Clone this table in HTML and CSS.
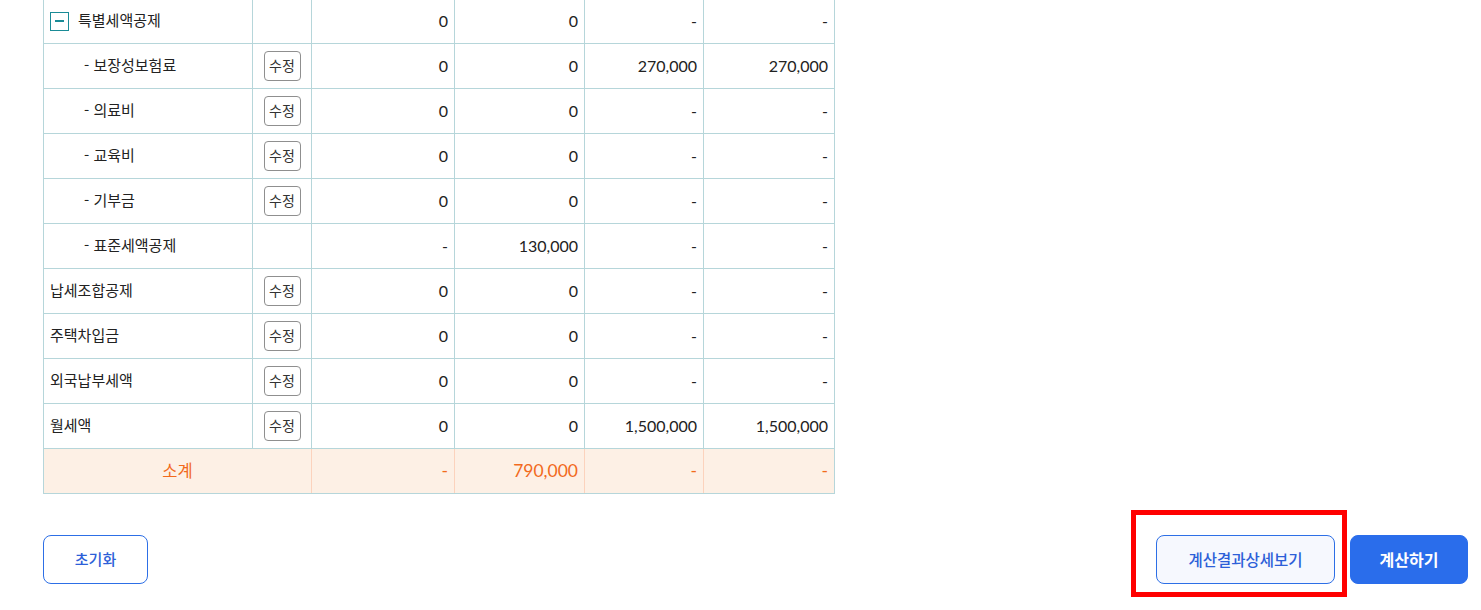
FILE: index.html
```html
<!DOCTYPE html>
<html lang="ko">
<head>
<meta charset="utf-8">
<title>세액공제</title>
<link rel="stylesheet" href="styles.css">
</head>
<body>
<div class="page">
  <table class="grid">
    <colgroup>
      <col class="c-name"><col class="c-btn"><col class="c-a"><col class="c-b"><col class="c-c"><col class="c-d">
    </colgroup>
    <tbody>
      <tr>
        <td class="group"><span class="tree"><span class="toggle"><span class="bar"></span></span><span class="tree-label">특별세액공제</span></span></td>
        <td></td><td class="num">0</td><td class="num">0</td><td class="num">-</td><td class="num">-</td>
      </tr>
      <tr>
        <td class="name sub">- 보장성보험료</td>
        <td class="btncell"><button class="edit">수정</button></td>
        <td class="num">0</td><td class="num">0</td><td class="num">270,000</td><td class="num">270,000</td>
      </tr>
      <tr>
        <td class="name sub">- 의료비</td>
        <td class="btncell"><button class="edit">수정</button></td>
        <td class="num">0</td><td class="num">0</td><td class="num">-</td><td class="num">-</td>
      </tr>
      <tr>
        <td class="name sub">- 교육비</td>
        <td class="btncell"><button class="edit">수정</button></td>
        <td class="num">0</td><td class="num">0</td><td class="num">-</td><td class="num">-</td>
      </tr>
      <tr>
        <td class="name sub">- 기부금</td>
        <td class="btncell"><button class="edit">수정</button></td>
        <td class="num">0</td><td class="num">0</td><td class="num">-</td><td class="num">-</td>
      </tr>
      <tr>
        <td class="name sub">- 표준세액공제</td>
        <td></td>
        <td class="num">-</td><td class="num">130,000</td><td class="num">-</td><td class="num">-</td>
      </tr>
      <tr>
        <td class="name">납세조합공제</td>
        <td class="btncell"><button class="edit">수정</button></td>
        <td class="num">0</td><td class="num">0</td><td class="num">-</td><td class="num">-</td>
      </tr>
      <tr>
        <td class="name">주택차입금</td>
        <td class="btncell"><button class="edit">수정</button></td>
        <td class="num">0</td><td class="num">0</td><td class="num">-</td><td class="num">-</td>
      </tr>
      <tr>
        <td class="name">외국납부세액</td>
        <td class="btncell"><button class="edit">수정</button></td>
        <td class="num">0</td><td class="num">0</td><td class="num">-</td><td class="num">-</td>
      </tr>
      <tr>
        <td class="name">월세액</td>
        <td class="btncell"><button class="edit">수정</button></td>
        <td class="num">0</td><td class="num">0</td><td class="num">1,500,000</td><td class="num">1,500,000</td>
      </tr>
      <tr class="total">
        <td class="label" colspan="2">소계</td>
        <td class="num">-</td><td class="num">790,000</td><td class="num">-</td><td class="num">-</td>
      </tr>
    </tbody>
  </table>

  <div class="actions">
    <button class="btn btn-outline">초기화</button>
    <div class="right">
      <div class="highlight-wrap">
        <button class="btn btn-soft">계산결과상세보기</button>
        <span class="highlight"></span>
      </div>
      <button class="btn btn-primary">계산하기</button>
    </div>
  </div>
</div>
</body>
</html>
```

FILE: styles.css
```css
* { box-sizing: border-box; }

html, body {
  margin: 0;
  padding: 0;
  background: #ffffff;
  overflow: hidden;
}

body {
  font-family: "Lato", "Noto Sans CJK KR", sans-serif;
  color: #222222;
}

.page {
  width: 1481px;
  height: 610px;
  padding: 0 13px 0 43px;
}

.grid {
  border-collapse: collapse;
  table-layout: fixed;
  width: 791px;
  margin-top: -2px;
  font-size: 16px;
}

.c-name { width: 209px; }
.c-btn { width: 59px; }
.c-a { width: 143px; }
.c-b { width: 130px; }
.c-c { width: 119px; }
.c-d { width: 131px; }

.grid td {
  height: 45px;
  border: 1px solid #b6d6da;
  padding: 0 6px;
  vertical-align: middle;
  white-space: nowrap;
  line-height: 20px;
}

.grid td.name {
  font-family: "Noto Sans CJK KR", sans-serif;
  font-size: 15px;
  padding: 0 6px 2px 6px;
  color: #222;
}

.grid td.sub {
  padding-left: 40px;
}

.grid td.group {
  padding: 0 6px 0 6px;
}

.tree {
  display: flex;
  align-items: center;
}

.tree-label {
  font-family: "Noto Sans CJK KR", sans-serif;
  font-size: 15px;
  line-height: 20px;
  padding-bottom: 2px;
}

.toggle {
  display: flex;
  align-items: center;
  justify-content: center;
  width: 19px;
  height: 19px;
  border: 1px solid #1a8b96;
  margin-right: 9px;
  flex: none;
}

.toggle .bar {
  width: 9px;
  height: 1.5px;
  background: #1a8b96;
}

.grid td.num {
  text-align: right;
  padding-right: 6px;
}

.btncell {
  text-align: center;
}

.edit {
  font-family: "Noto Sans CJK KR", sans-serif;
  font-size: 14px;
  color: #333;
  background: #fff;
  border: 1px solid #8f8f8f;
  border-radius: 4px;
  width: 37px;
  height: 30px;
  padding: 0 0 2px 0;
  line-height: 24px;
  vertical-align: middle;
}

.total td {
  background: #fdf0e5;
  color: #f26a1c;
  border-color: #fcd3bd;
}

.total td:first-child { border-left-color: #b6d6da; }
.total td:last-child { border-right-color: #b6d6da; }
.total td { border-bottom-color: #b6d6da; }

.grid .total td.label {
  text-align: center;
  font-family: "Noto Sans CJK KR", sans-serif;
  font-size: 16.5px;
  padding: 0 0 3px 0;
}

.grid .total td.num {
  font-size: 17.5px;
}

.actions {
  display: flex;
  justify-content: space-between;
  align-items: center;
  margin-top: 41px;
}

.right {
  display: flex;
  gap: 15px;
  align-items: center;
}

.btn {
  font-family: "Noto Sans CJK KR", sans-serif;
  height: 49px;
  border-radius: 8px;
  font-size: 15px;
  padding: 0 0 2px 0;
  cursor: pointer;
}

.btn-outline {
  width: 105px;
  background: #fff;
  border: 1px solid #2d6fe6;
  color: #2d5fd8;
  font-weight: 500;
}

.btn-soft {
  width: 179px;
  background: #f6f8fe;
  border: 1px solid #2d6fe6;
  color: #2d5fd8;
  font-size: 15.5px;
  font-weight: 500;
}

.btn-primary {
  width: 118px;
  background: #2a6deb;
  border: 1px solid #2a6deb;
  color: #ffffff;
  font-weight: 700;
  font-size: 16px;
}

.highlight-wrap {
  position: relative;
  display: flex;
}

.highlight {
  position: absolute;
  left: -25px;
  top: -25px;
  right: -12px;
  bottom: -13px;
  border: 5px solid #ff0000;
  pointer-events: none;
}
```
